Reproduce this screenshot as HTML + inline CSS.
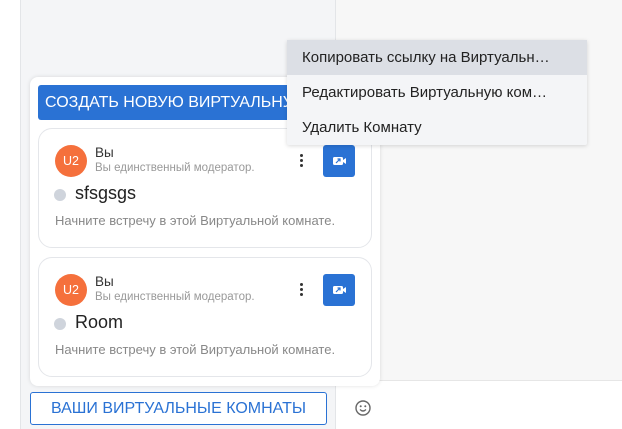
<!DOCTYPE html>
<html><head><meta charset="utf-8"><style>
*{box-sizing:border-box;margin:0;padding:0}
body{width:622px;height:429px;overflow:hidden;position:relative;background:#fff;font-family:"Liberation Sans",sans-serif}
.side{position:absolute;left:20px;top:0;width:316px;height:429px;background:#f4f5f7;border-left:1px solid #e3e5e8;border-right:1px solid #e3e5e8}
.pat{position:absolute;left:336px;top:0;width:286px;height:381px;background:#f7f7f7;border-bottom:1px solid #e6e6e6}
.pop{position:absolute;left:30px;top:77px;width:350px;height:309px;background:#fff;border-radius:8px;box-shadow:0 0 4px rgba(0,0,0,.12)}
.cbtn{position:absolute;left:8px;top:8px;width:270px;height:35px;background:#2a72d4;border-radius:3px;color:#fff;font-size:16px;line-height:35px;padding-left:7px;white-space:nowrap;overflow:hidden}
.card{position:absolute;left:8px;width:334px;height:120px;border:1px solid #e4e6ea;border-radius:14px;background:#fff}
.av{position:absolute;left:16px;top:16px;width:32px;height:32px;border-radius:50%;background:#f5703c;color:#fff;font-size:12.5px;text-align:center;line-height:32px}
.n{position:absolute;left:56px;top:16px;font-size:13.5px;color:#333}
.m{position:absolute;left:56px;top:33px;font-size:11.5px;color:#999}
.dots{position:absolute;left:261px;top:25px;width:3px}
.dots i{display:block;width:3px;height:3px;background:#333;border-radius:50%;margin-bottom:2px}
.vb{position:absolute;left:284px;top:16px;width:32px;height:32px;background:#2a72d4;border-radius:3px}
.dot{position:absolute;left:15px;top:60px;width:12px;height:12px;border-radius:50%;background:#cfd4dc}
.t{position:absolute;left:36px;top:54px;font-size:18px;color:#222}
.d{position:absolute;left:16px;top:84px;font-size:13px;color:#888;white-space:nowrap}
.menu{position:absolute;left:287px;top:40px;width:300px;height:105px;background:#f4f5f7;box-shadow:0 1px 4px rgba(0,0,0,.15);border-radius:2px}
.mi{height:35px;line-height:35px;padding-left:15px;font-size:15px;color:#222;white-space:nowrap}
.mi.h{background:#dcdfe5}
.yb{position:absolute;left:30px;top:392px;width:297px;height:33px;border:1px solid #2a72d4;border-radius:3px;background:#fff;color:#2a72d4;font-size:16px;text-align:center;line-height:31px}
</style></head><body>
<div class="side"></div>
<div class="pat"></div>
<div class="pop">
<div class="cbtn">СОЗДАТЬ НОВУЮ ВИРТУАЛЬНУЮ</div>
<div class="card" style="top:51px">
<div class="av">U2</div><div class="n">Вы</div><div class="m">Вы единственный модератор.</div>
<div class="dots"><i></i><i></i><i></i></div>
<div class="vb"><svg width="32" height="32" viewBox="0 0 32 32"><rect x="10" y="12" width="10" height="8" rx="1.5" fill="#fff"/><path d="M20 15l3-2v6l-3-2z" fill="#fff"/><path d="M13 18l4-4M14.5 14h2.5v2.5" stroke="#2a72d4" stroke-width="1.2" fill="none"/></svg></div>
<div class="dot"></div><div class="t">sfsgsgs</div>
<div class="d">Начните встречу в этой Виртуальной комнате.</div>
</div>
<div class="card" style="top:180px">
<div class="av">U2</div><div class="n">Вы</div><div class="m">Вы единственный модератор.</div>
<div class="dots"><i></i><i></i><i></i></div>
<div class="vb"><svg width="32" height="32" viewBox="0 0 32 32"><rect x="10" y="12" width="10" height="8" rx="1.5" fill="#fff"/><path d="M20 15l3-2v6l-3-2z" fill="#fff"/><path d="M13 18l4-4M14.5 14h2.5v2.5" stroke="#2a72d4" stroke-width="1.2" fill="none"/></svg></div>
<div class="dot"></div><div class="t">Room</div>
<div class="d">Начните встречу в этой Виртуальной комнате.</div>
</div>
</div>
<div class="menu">
<div class="mi h">Копировать ссылку на Виртуальн…</div>
<div class="mi">Редактировать Виртуальную ком…</div>
<div class="mi">Удалить Комнату</div>
</div>
<div class="yb">ВАШИ ВИРТУАЛЬНЫЕ КОМНАТЫ</div>
<svg style="position:absolute;left:354px;top:399px" width="18" height="18" viewBox="0 0 18 18"><circle cx="9" cy="9" r="7" fill="none" stroke="#666" stroke-width="1.4"/><circle cx="6.7" cy="7.3" r="1" fill="#666"/><circle cx="11.3" cy="7.3" r="1" fill="#666"/><path d="M6 10.5q3 3 6 0" fill="none" stroke="#666" stroke-width="1.3"/></svg>
</body></html>
